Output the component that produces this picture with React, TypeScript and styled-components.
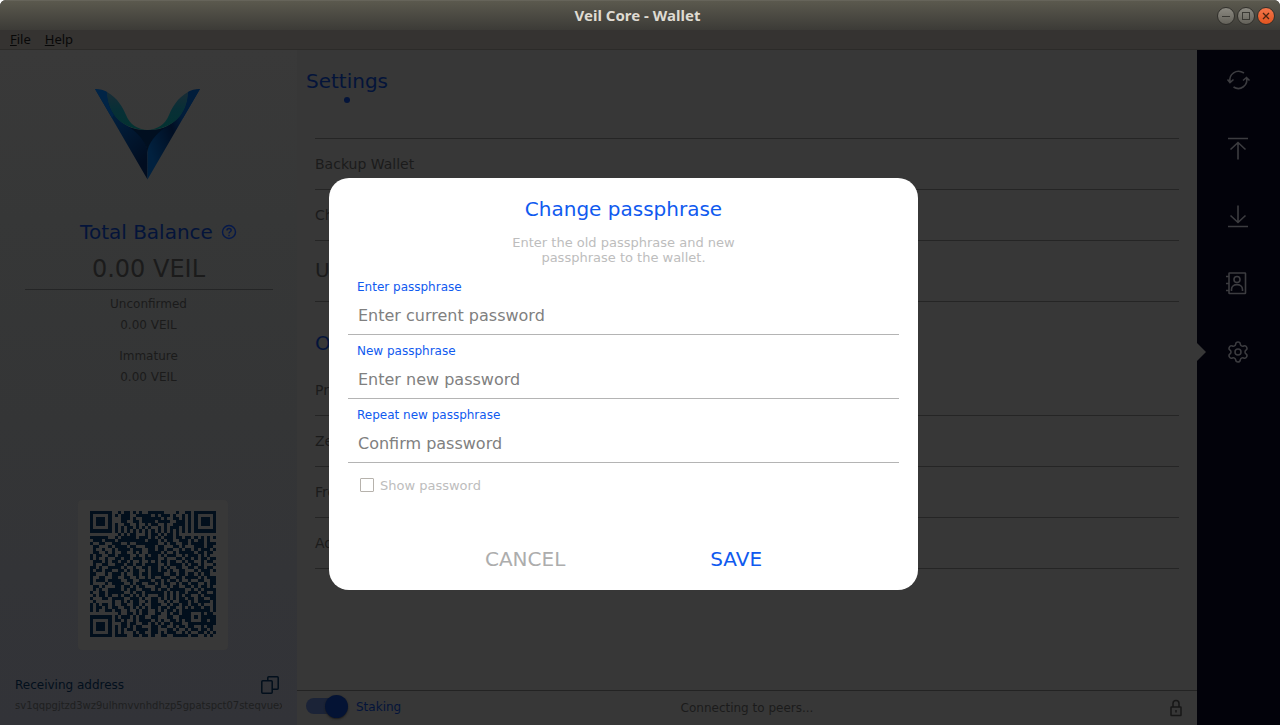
import React from "react";
import styled, { createGlobalStyle } from "styled-components";
import { Settings } from "lucide-react";

const GlobalStyle = createGlobalStyle`
  *, *::before, *::after { box-sizing: border-box; }
  body { margin: 0; background: #ffffff; font-family: "DejaVu Sans", sans-serif; }
  button { font: inherit; border: 0; padding: 0; background: none; cursor: pointer; }
  h1, h2, h3, p, ul, dl, dd { margin: 0; padding: 0; font-weight: normal; }
  ul { list-style: none; }
`;

const color = {
  panel: "#373737",
  line: "#252525",
  dimText: "#1b1b1b",
  dimBlue: "#04143a",
  navy: "#020f1c",
  accent: "#105aef",
  nav: "#02020a",
};

const Window = styled.div`
  position: relative;
  display: flex;
  flex-direction: column;
  min-height: 100vh;
  border-radius: 6px 6px 0 0;
  overflow: hidden;
  background: ${color.panel};
`;

const TitleBar = styled.header`
  display: grid;
  grid-template-columns: 1fr auto 1fr;
  align-items: center;
  height: 30px;
  padding: 0 5px 0 0;
  background: linear-gradient(#5b594e, #3c3b37);
  border-top: 1px solid #66645a;
`;

const WindowTitle = styled.h1`
  grid-column: 2;
  font: 700 15px/20px "Noto Sans", sans-serif;
  padding-bottom: 2px;
  color: #dfdbd2;
`;

const WindowControls = styled.div`
  display: flex;
  justify-content: flex-end;
  gap: 2px;
`;

const WindowButton = styled.button<{ $close?: boolean }>`
  display: flex;
  width: 18px;
  height: 18px;
  border: 1px solid #31302c;
  border-radius: 50%;
  background: ${(p) =>
    p.$close
      ? "linear-gradient(#f4764b, #e2541f)"
      : "linear-gradient(#8b8981, #64625a)"};
`;

const MenuBar = styled.nav`
  display: flex;
  gap: 14px;
  height: 20px;
  padding: 0 10px;
  background: #353331;
  border-bottom: 1px solid #2c2b29;
`;

const MenuButton = styled.button`
  font: 13px/19px "Noto Sans", sans-serif;
  color: #080808;
`;

const Body = styled.div`
  display: flex;
  flex: 1;
`;

const Sidebar = styled.aside`
  display: flex;
  flex-direction: column;
  align-items: center;
  width: 297px;
  flex-shrink: 0;
  padding: 38px 15px 12px;
  background: linear-gradient(#393939 0%, #363737 25%, #343536 55%, #323338 100%);
`;

const BalanceTitle = styled.h2`
  display: flex;
  align-items: center;
  gap: 8px;
  margin-top: 40px;
  padding-left: 20px;
  font-size: 20px;
  line-height: 24px;
  color: ${color.dimBlue};
`;

const Balance = styled.p`
  width: 248px;
  margin: 11px 0 4px;
  padding-bottom: 6px;
  border-bottom: 1px solid #242526;
  font-size: 24px;
  line-height: 28px;
  text-align: center;
  color: ${color.dimText};
`;

const Amounts = styled.dl`
  margin-bottom: 10px;
  font-size: 12px;
  line-height: 21px;
  text-align: center;
  color: ${color.dimText};
`;

const QrCard = styled.div`
  display: flex;
  padding: 11px 12px 13px;
  margin: auto 0 0 8px;
  background: #383838;
  border-radius: 4px;
`;

const AddressHeader = styled.div`
  display: flex;
  align-items: center;
  justify-content: space-between;
  align-self: stretch;
  height: 20px;
  margin: 25px 0 4px;
  padding-right: 3px;
  font-size: 12px;
  color: ${color.navy};
`;

const IconButton = styled.button`
  display: flex;
`;

const Address = styled.p`
  align-self: stretch;
  overflow: hidden;
  font-size: 10px;
  line-height: 14px;
  white-space: nowrap;
  color: #1e1f20;
`;

const Content = styled.div`
  display: flex;
  flex-direction: column;
  flex: 1;
  min-width: 0;
`;

const Main = styled.main`
  flex: 1;
  padding: 19px 18px 0;
`;

const PageTab = styled.h2`
  display: flex;
  flex-direction: column;
  align-items: center;
  width: fit-content;
  margin: 0 0 35px -9px;
  font-size: 20px;
  line-height: 24px;
  color: ${color.dimBlue};
  &::after {
    content: "";
    width: 6px;
    height: 6px;
    margin-top: 4px;
    border-radius: 50%;
    background: ${color.dimBlue};
  }
`;

const SettingsList = styled.ul<{ $ruled?: boolean }>`
  border-top: ${(p) => (p.$ruled ? `1px solid ${color.line}` : "0")};
`;

const SettingRow = styled.li<{ $large?: boolean }>`
  display: flex;
  align-items: center;
  height: ${(p) => (p.$large ? 61 : 51)}px;
  padding-bottom: ${(p) => (p.$large ? 2 : 0)}px;
  border-bottom: 1px solid ${color.line};
  font-size: ${(p) => (p.$large ? 20 : 14)}px;
  color: ${color.dimText};
`;

const SectionTitle = styled.h3`
  margin: 29px 0 0;
  padding-bottom: 10px;
  font-size: 20px;
  line-height: 24px;
  color: ${color.dimBlue};
`;

const StatusBar = styled.footer`
  display: grid;
  grid-template-columns: 1fr auto 1fr;
  align-items: center;
  height: 35px;
  padding: 0 9px;
  border-top: 1px solid #232323;
  font-size: 12px;
  color: ${color.dimText};
  svg { justify-self: end; margin-right: 5px; }
`;

const StakingLabel = styled.label`
  display: flex;
  align-items: center;
  gap: 8px;
  padding-bottom: 2px;
  color: ${color.dimBlue};
`;

const Toggle = styled.input`
  position: relative;
  appearance: none;
  display: flex;
  align-items: center;
  justify-content: flex-end;
  width: 42px;
  height: 24px;
  margin: 0 0 2px;
  &::before {
    content: "";
    width: 35px;
    height: 16px;
    margin-right: -16px;
    border-radius: 8px;
    background: #1b2337;
  }
  &::after {
    content: "";
    width: 23px;
    height: 23px;
    border-radius: 50%;
    background: #041334;
    box-shadow: 0 1px 2px #1c1c1c;
  }
`;

const NavRail = styled.nav`
  display: flex;
  flex-direction: column;
  align-items: center;
  gap: 40px;
  width: 83px;
  flex-shrink: 0;
  padding-top: 16px;
  background: ${color.nav};
`;

const NavButton = styled.button<{ $active?: boolean }>`
  position: relative;
  display: flex;
  align-items: center;
  justify-content: center;
  width: 100%;
  height: 28px;
  padding-right: 2px;
  color: #3c3c40;
  &::before {
    content: "";
    display: ${(p) => (p.$active ? "block" : "none")};
    position: absolute;
    left: 0;
    border: 9px solid transparent;
    border-left-color: ${color.panel};
    border-right-width: 0;
  }
`;

const Overlay = styled.div`
  position: absolute;
  inset: 50px 0 0;
  display: flex;
  align-items: flex-start;
  justify-content: center;
  padding: 128px 33px 0 0;
`;

const Dialog = styled.form`
  display: flex;
  flex-direction: column;
  width: 589px;
  padding: 19px;
  background: #ffffff;
  border-radius: 20px;
`;

const DialogTitle = styled.h2`
  font-size: 20px;
  line-height: 24px;
  text-align: center;
  color: ${color.accent};
`;

const DialogText = styled.p`
  align-self: center;
  width: 240px;
  margin: 14px 0 6px;
  font-size: 13px;
  line-height: 15px;
  text-align: center;
  color: #bdbdbd;
`;

const Field = styled.div`
  display: flex;
  flex-direction: column;
  margin-top: 8px;
`;

const FieldLabel = styled.label`
  padding-left: 9px;
  font-size: 12px;
  line-height: 16px;
  color: ${color.accent};
`;

const FieldInput = styled.input`
  height: 40px;
  padding: 2px 10px 0;
  border: 0;
  border-bottom: 1px solid #b4b4b4;
  outline: 0;
  font: 16px "DejaVu Sans", sans-serif;
  color: #333333;
  &::placeholder { color: #808080; opacity: 1; }
`;

const CheckLabel = styled.label`
  display: flex;
  align-items: center;
  gap: 6px;
  width: fit-content;
  height: 16px;
  margin: 14px 0 54px;
  padding-left: 12px;
  font-size: 13px;
  color: #bdbdbd;
`;

const Checkbox = styled.input`
  appearance: none;
  width: 14px;
  height: 14px;
  margin: 0;
  border: 1px solid #b6b2ac;
  border-radius: 1px;
  background: #ffffff;
  &:checked { background: ${color.accent}; }
`;

const Actions = styled.div`
  display: flex;
  justify-content: center;
  gap: 145px;
`;

const ActionButton = styled.button<{ $primary?: boolean }>`
  font-size: 20px;
  line-height: 24px;
  color: ${(p) => (p.$primary ? color.accent : "#adadad")};
`;

const FINDER = ["#######", "#.....#", "#.###.#", "#.###.#", "#.###.#", "#.....#", "#######"];

const QR_TOP = [
  ".#.##.#.#..#####....#..##",
  "#.###..#####.#.###.#..#.#",
  "..###.#..######.#..##.#.#",
  "..##..##.####.####..###.#",
  "#..##..#..#.##..#..####.#",
  "#.#.##.#.#.#..#.#.###.#.#",
  "#.#.#.#.#.#.#.#.#.#.#.#.#",
];

const QR_REST = [
  ".........#.#.##...#.##.#.##.#............",
  "######..#.#####.###.#.#.###.##.##.#.#.#.#",
  ".###.###.#########.###.#.##..###.#.##.#..",
  "#..##..###..#..#######..#.##..##.####.###",
  ".##...#.####.##...###.##...##.#...###.##.",
  ".#..#..#.####.###..##.##.##..#.##.#.###.#",
  ".##..#.#..##..#.#..####.#..#.#####.##.##.",
  "#.##..##.####..#..#.##.#.###..#.###.#.#..",
  "#.#..#..##.##.###.####..#...##.##.#.##.##",
  ".###.#.##.##.#..#..#.#.##.##..#.##..#.##.",
  ".#..##..###.##.##.####..#.####.#.##.#...#",
  "##.#..####.#..#..##.##.#.#..##..##.##.##.",
  "#.##.##..##.#.##..#.##.##.#..##...#.###.#",
  "##...#.###.#..##.##.####..##.##.##.#.##..",
  "#..##..##..##..#..#.#..###..##.####.#.###",
  "#.###.####..##..####.##.#.##.#..#..##..##",
  "#....#.####..#.##..##.#.##..#.##.##..#.##",
  ".##.#...##.##.#.##...##..#.##..##.#.##.#.",
  ".#.#..####.#.##..###.#.##.#####..#.#.####",
  "#..##.#####..#.##.######.#.#.##.###.##..#",
  ".#.##.#..#.##.#.#.#...##.#.#.#.##..#.####",
  "#...##.####..###.#..##.#.#.#.##.##.##..##",
  ".#.....#..#.#.##..#.##..#.#..###.#.####.#",
  "#.#.##.#..##..##.#..###..#.##.##.##.#...#",
  "#.##.#.##..##.#.#.#.##.##.##..#.#.##.##.#",
  "#.#..##.##..#..#.##..#.#.##.#.###..#.##.#",
  ".........#..##.#.##..##..#.##.####..#.##.",
];

const QR_BOTTOM = [
  "#.###.#.##..##...##..####.#.#####",
  "##.#..#.####.#.#..##.#.##.####.##",
  "..##.##..##.#.#.##.###..#.##.####",
  "#.##.#.##...##.##..#.##.##..#.##.",
  "#.#.##.####.##...##.#..#.##.##.#.",
  "#.#...#.##..##.#.###..#.#..##.#.#",
  "####..##.##.#..##..#####.##..#.#.",
];

const QR_ROWS = [
  ...QR_TOP.map((row, i) => `${FINDER[i]}.${row}.${FINDER[i]}`),
  ...QR_REST,
  ...QR_BOTTOM.map((row, i) => `${FINDER[i]}.${row}`),
];

const isDark = (cell: string, x: number, y: number) => {
  const ring = Math.max(Math.abs(x - 34), Math.abs(y - 34));
  return ring <= 2 ? ring !== 1 : cell === "#";
};

const QrCode = () => (
  <svg width="126" height="126" viewBox="0 0 41 41" shapeRendering="crispEdges" role="img" aria-label="Receiving address code">
    <path
      fill="#020f1c"
      d={QR_ROWS.map((row, y) =>
        [...row].map((cell, x) => (isDark(cell, x, y) ? `M${x} ${y}h1v1h-1z` : "")).join("")
      ).join("")}
    />
  </svg>
);

const LogoMark = styled.svg`
  margin-right: 2px;
`;

const Logo = () => (
  <LogoMark width="105" height="92" viewBox="0 0 105 92" aria-hidden="true">
    <defs>
      <linearGradient id="leftWing" x1="0" y1="0" x2="0.6" y2="1">
        <stop offset="0" stopColor="#012446" />
        <stop offset="0.5" stopColor="#011c38" />
        <stop offset="1" stopColor="#010d20" />
      </linearGradient>
      <linearGradient id="rightWing" x1="0" y1="0.6" x2="0.7" y2="0.2">
        <stop offset="0" stopColor="#01213f" />
        <stop offset="0.6" stopColor="#010e22" />
        <stop offset="1" stopColor="#012244" />
      </linearGradient>
      <linearGradient id="fold" x1="0" y1="0" x2="0" y2="1">
        <stop offset="0" stopColor="#182c36" />
        <stop offset="0.45" stopColor="#082f36" />
        <stop offset="1" stopColor="#023331" />
      </linearGradient>
    </defs>
    <path fill="url(#leftWing)" d="M0 1 12 4 C13 23 24 36 40 41 C47 48 52 56 52.500 63 V91.500 Z" />
    <path fill="url(#rightWing)" d="M105 1 93 4 C92 23 81 36 65 41 C58 48 53 56 52.500 63 V91.500 Z" />
    <path fill="#010f20" d="M34 39 C42 43 63 43 71 39 C60 46 53 56 52.500 64 C52 56 45 46 34 39Z" />
    <path fill="url(#fold)" d="M12 4 C23 10 28 20 31 27 C35 37 43 41 52 42 C29 42 12 27 12 4Z" />
    <path fill="url(#fold)" d="M93 4 C82 10 77 20 74 27 C70 37 62 41 53 42 C76 42 93 27 93 4Z" />
    <path fill="#012446" d="M0 1 C5 1 9 2 12 4 C12 14 15 21 19 27 L17 30Z" />
    <path fill="#011d3b" d="M105 1 C100 1 96 2 93 4 C93 14 90 21 86 27 L88 30Z" />
  </LogoMark>
);

const HelpIcon = () => (
  <svg width="16" height="16" viewBox="0 0 16 16" fill="none" stroke="#06194a" strokeWidth="1.400" aria-hidden="true">
    <circle cx="8" cy="8" r="6.500" />
    <path d="M6 6.500C6 3.800 10.200 3.800 10.200 6.300C10.200 7.900 8 7.700 8 9.600M8 10.800V12.200" />
  </svg>
);

const CopyIcon = () => (
  <svg width="18" height="18" viewBox="0 0 18 18" fill="none" stroke="#020f1c" strokeWidth="1.500" aria-hidden="true">
    <rect x="0.800" y="4.800" width="10.400" height="12.400" rx="1" />
    <path d="M6.800 4.500V1.800a1 1 0 0 1 1-1h8.400a1 1 0 0 1 1 1v10.400a1 1 0 0 1-1 1h-4.500" />
  </svg>
);

const LockIcon = () => (
  <svg width="14" height="18" viewBox="0 0 14 18" fill="none" stroke="#171717" strokeWidth="1.500" aria-hidden="true">
    <rect x="2" y="8" width="10" height="8.500" rx="0.500" />
    <path d="M4 8V4.500a3 3 0 0 1 6 0V8M7 11v2.500" />
  </svg>
);

const NavIcon = ({ children }: { children: React.ReactNode }) => (
  <svg width="26" height="26" viewBox="0 0 26 26" fill="none" stroke="currentColor" strokeWidth="1.600" aria-hidden="true">
    {children}
  </svg>
);

const navItems = [
  {
    label: "Sync",
    icon: (
      <NavIcon>
        <path d="M5 15C3.500 7 11.500 1.500 19 6M21.500 10.500C23.500 18 15.500 24.500 8.500 20M2.500 12.500 5 15.500 8.500 12.500M18 13.500 21.500 10.500 24.500 13.500" />
      </NavIcon>
    ),
  },
  {
    label: "Send",
    icon: <NavIcon><path d="M3 3.500H23M13 24.500V8M5.500 14.500 13 7.500 20.500 14.500" /></NavIcon>,
  },
  {
    label: "Receive",
    icon: <NavIcon><path d="M3 23.500H23M13 2.500V19M5.500 12.500 13 19.500 20.500 12.500" /></NavIcon>,
  },
  {
    label: "Contacts",
    icon: (
      <NavIcon>
        <rect x="4" y="2" width="16.500" height="20.500" rx="0.500" />
        <circle cx="12" cy="8.500" r="3" />
        <path d="M6.500 20V18.500C6.500 12 17.500 12 17.500 18.500V20M1 5.500H4M1 12.500H4M1 19.500H4" />
      </NavIcon>
    ),
  },
  { label: "Settings", icon: <Settings size={24} strokeWidth={1.5} /> },
];

const fields = [
  { id: "current", label: "Enter passphrase", placeholder: "Enter current password" },
  { id: "next", label: "New passphrase", placeholder: "Enter new password" },
  { id: "repeat", label: "Repeat new passphrase", placeholder: "Confirm password" },
];

export default function App() {
  const [visible, setVisible] = React.useState(false);

  return (
    <>
      <GlobalStyle />
      <Window>
        <TitleBar>
          <WindowTitle>Veil Core - Wallet</WindowTitle>
          <WindowControls>
            <WindowButton aria-label="Minimize">
              <svg width="16" height="16" stroke="#3a3934"><path d="M4 8.500H12" /></svg>
            </WindowButton>
            <WindowButton aria-label="Maximize">
              <svg width="16" height="16" stroke="#3a3934" fill="none"><rect x="4.500" y="4.500" width="7" height="7" /></svg>
            </WindowButton>
            <WindowButton $close aria-label="Close">
              <svg width="16" height="16" stroke="#4a2412" strokeWidth="1.300"><path d="M5 5 11 11M11 5 5 11" /></svg>
            </WindowButton>
          </WindowControls>
        </TitleBar>
        <MenuBar>
          <MenuButton><u>F</u>ile</MenuButton>
          <MenuButton><u>H</u>elp</MenuButton>
        </MenuBar>
        <Body>
          <Sidebar>
            <Logo />
            <BalanceTitle>Total Balance <HelpIcon /></BalanceTitle>
            <Balance>0.00 VEIL</Balance>
            <Amounts>
              <dt>Unconfirmed</dt>
              <dd>0.00 VEIL</dd>
            </Amounts>
            <Amounts>
              <dt>Immature</dt>
              <dd>0.00 VEIL</dd>
            </Amounts>
            <QrCard><QrCode /></QrCard>
            <AddressHeader>
              Receiving address
              <IconButton aria-label="Copy address"><CopyIcon /></IconButton>
            </AddressHeader>
            <Address>sv1qqpgjtzd3wz9ulhmvvnhdhzp5gpatspct07steqvuex</Address>
          </Sidebar>
          <Content>
            <Main>
              <PageTab>Settings</PageTab>
              <SettingsList $ruled>
                <SettingRow>Backup Wallet</SettingRow>
                <SettingRow>Change</SettingRow>
                <SettingRow $large>Unit</SettingRow>
              </SettingsList>
              <SectionTitle>Other</SectionTitle>
              <SettingsList>
                <SettingRow>Proxy</SettingRow>
                <SettingRow>Zerocoin</SettingRow>
                <SettingRow>French</SettingRow>
                <SettingRow>Advanced</SettingRow>
              </SettingsList>
            </Main>
            <StatusBar>
              <StakingLabel>
                <Toggle type="checkbox" defaultChecked />
                Staking
              </StakingLabel>
              <span>Connecting to peers...</span>
              <LockIcon />
            </StatusBar>
          </Content>
          <NavRail>
            {navItems.map((item) => (
              <NavButton key={item.label} aria-label={item.label} $active={item.label === "Settings"}>
                {item.icon}
              </NavButton>
            ))}
          </NavRail>
        </Body>
        <Overlay>
          <Dialog role="dialog" aria-labelledby="dialog-title" onSubmit={(e) => e.preventDefault()}>
            <DialogTitle id="dialog-title">Change passphrase</DialogTitle>
            <DialogText>Enter the old passphrase and new passphrase to the wallet.</DialogText>
            {fields.map((field) => (
              <Field key={field.id}>
                <FieldLabel htmlFor={field.id}>{field.label}</FieldLabel>
                <FieldInput
                  id={field.id}
                  type={visible ? "text" : "password"}
                  placeholder={field.placeholder}
                />
              </Field>
            ))}
            <CheckLabel>
              <Checkbox type="checkbox" checked={visible} onChange={(e) => setVisible(e.target.checked)} />
              Show password
            </CheckLabel>
            <Actions>
              <ActionButton type="button">CANCEL</ActionButton>
              <ActionButton type="submit" $primary>SAVE</ActionButton>
            </Actions>
          </Dialog>
        </Overlay>
      </Window>
    </>
  );
}
